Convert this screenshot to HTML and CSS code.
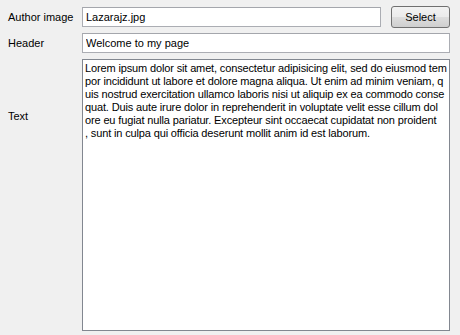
FILE: index.html
```html
<!DOCTYPE html>
<html lang="en">
<head>
    <meta charset="UTF-8">
    <title>Page editor</title>
    <link rel="stylesheet" href="styles.css">
</head>
<body>
    <div class="editor-form">
        <label class="field-label" for="author">Author image</label>
        <div class="file-row">
            <input type="text" id="author" class="line-input" value="Lazarajz.jpg">
            <button type="button" class="select-btn">Select</button>
        </div>

        <label class="field-label" for="header">Header</label>
        <input type="text" id="header" class="line-input" value="Welcome to my page">

        <label class="field-label text-label" for="body">Text</label>
        <div id="body" class="text-box">
            <span class="wrap-line">Lorem ipsum dolor sit amet, consectetur adipisicing elit, sed do eiusmod tem</span>
            <span class="wrap-line">por incididunt ut labore et dolore magna aliqua. Ut enim ad minim veniam, q</span>
            <span class="wrap-line">uis nostrud exercitation ullamco laboris nisi ut aliquip ex ea commodo conse</span>
            <span class="wrap-line">quat. Duis aute irure dolor in reprehenderit in voluptate velit esse cillum dol</span>
            <span class="wrap-line">ore eu fugiat nulla pariatur. Excepteur sint occaecat cupidatat non proident</span>
            <span class="wrap-line">, sunt in culpa qui officia deserunt mollit anim id est laborum.</span>
        </div>
    </div>
</body>
</html>
```

FILE: styles.css
```css
html, body {
    height: 100%;
}
body {
    margin: 0;
    background-color: #f0f0f0;
    font-family: "Liberation Sans", Arial, sans-serif;
    font-size: 11px;
    color: #000;
}
.editor-form {
    box-sizing: border-box;
    height: 100%;
    padding: 6px 10px 4px 8px;
    display: grid;
    grid-template-columns: 74px 1fr;
    grid-template-rows: 22px 20px 1fr;
    row-gap: 5px;
    align-items: center;
}
.field-label {
    align-self: center;
}
.text-label {
    align-self: start;
    margin-top: 52px;
}
.file-row {
    display: flex;
    align-items: center;
    gap: 10px;
}
.line-input {
    box-sizing: border-box;
    width: 100%;
    height: 20px;
    margin: 0;
    padding: 0 3px;
    border: 1px solid #abadb3;
    border-top-color: #a4a6ac;
    background: #fff;
    font: inherit;
    color: #000;
    outline: none;
}
.file-row .line-input {
    flex: 1;
}
.select-btn {
    box-sizing: border-box;
    width: 59px;
    height: 22px;
    margin: 0;
    padding: 0;
    border: 1px solid #707070;
    border-radius: 3px;
    background: linear-gradient(#f2f2f2 0%, #ebebeb 50%, #dddddd 51%, #cfcfcf 100%);
    font: inherit;
    color: #000;
}
.text-box {
    box-sizing: border-box;
    align-self: stretch;
    margin-top: 1px;
    padding: 2px 2px;
    border: 1px solid #828790;
    background: #fff;
    line-height: 13px;
    letter-spacing: -0.14px;
    overflow: hidden;
}
.wrap-line {
    display: block;
    white-space: nowrap;
}
```
